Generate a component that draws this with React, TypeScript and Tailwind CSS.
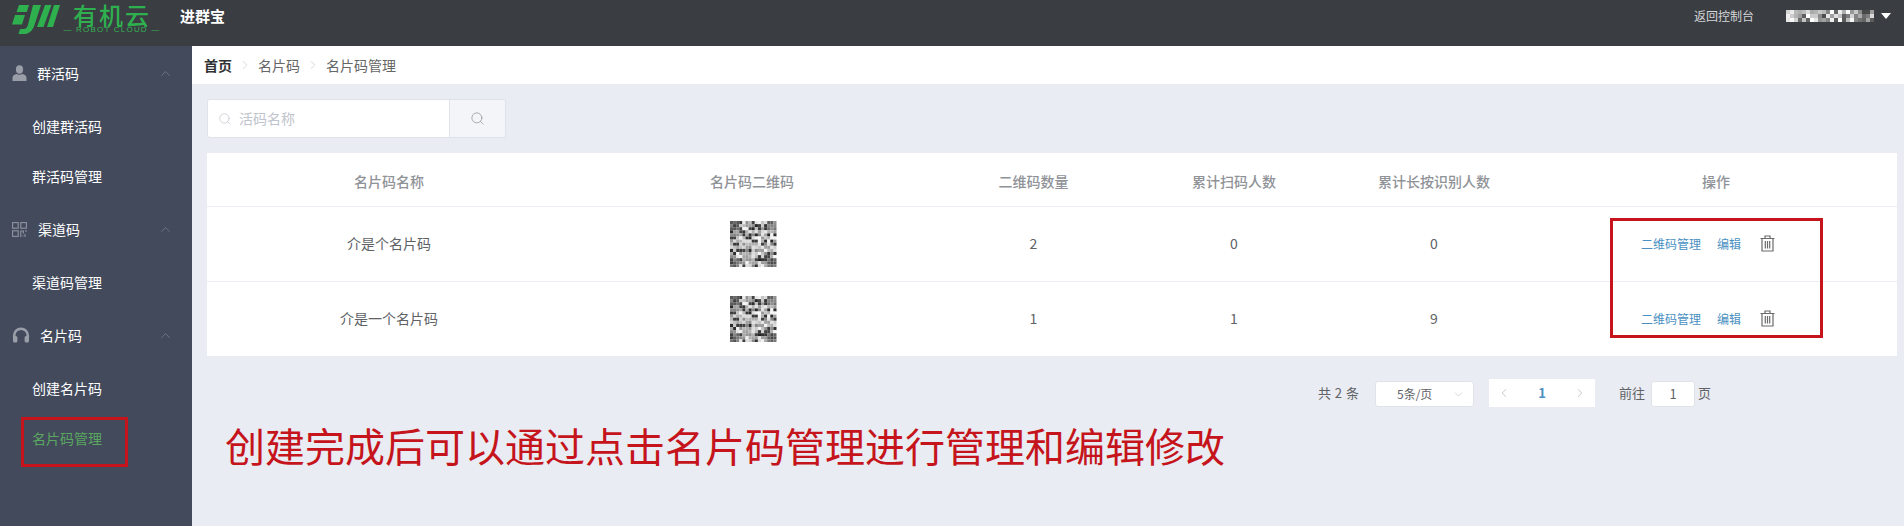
import { ChevronDown, ChevronLeft, ChevronRight, ChevronUp, Search } from "lucide-react";

const FONT = "font-['Noto_Sans_CJK_SC','Liberation_Sans',sans-serif]";

function Logo() {
  return (
    <div className="flex items-start w-[168px] h-[40px] pl-[12px]">
      <svg width="48" height="36" viewBox="0 0 48 36">
        <g fill="#2fb04f">
          <path d="M7 5h10l-2.2 7H4.5z" />
          <path d="M3 15h10l-3 9.5H0z" />
          <path d="M21 5h8l-6.5 20c-1.2 4-4 8-9 9H6.5l1.6-5h3.4c2.5 0 3.6-1.5 4.4-4z" />
          <path d="M33 5h6.5l-8 22H25z" />
          <path d="M42 5h6l-7 22h-6z" />
        </g>
      </svg>
      <div className="ml-[2px] w-[100px] flex flex-col items-center pt-[4px]">
        <span className="text-[24px] leading-[22px] font-medium tracking-[2px] text-[#2fb04f]">有机云</span>
        <span className="text-[8px] leading-[8px] tracking-[1.2px] text-[#35b354] whitespace-nowrap font-['Liberation_Sans',sans-serif]">— ROBOT CLOUD —</span>
      </div>
    </div>
  );
}

function Mosaic({ cols, rows, size, seed, light }: { cols: number; rows: number; size: number; seed: number; light?: boolean }) {
  // fixed pseudo random greys, same picture on every render
  const cells = [];
  let n = seed;
  for (let y = 0; y < rows; y++) {
    for (let x = 0; x < cols; x++) {
      n = (n * 1103515245 + 12345) % 2147483648;
      const v = (n >> 12) % 256;
      const corner = !light && (x < 3 || x > cols - 4) && (y < 3 || y > rows - 4);
      const grey = light ? 70 + (v * 185) / 255 : corner ? 60 + v / 3 : v < 70 ? 35 + v / 2 : 90 + v * 0.62;
      const g = Math.round(grey);
      cells.push(<rect key={x + "-" + y} x={x * size} y={y * size} width={size} height={size} fill={`rgb(${g},${g},${g})`} />);
    }
  }
  return (
    <svg width={cols * size} height={rows * size} className="block">
      {cells}
    </svg>
  );
}

function UserIcon() {
  return (
    <svg width="15" height="16" viewBox="0 0 15 16" fill="#9a9ea8">
      <ellipse cx="7.5" cy="4.5" rx="3.6" ry="4.2" />
      <path d="M0.5 16v-3.2c0-2.2 2-3.3 4-3.8 1.8 1 4.2 1 6 0 2 .5 4 1.6 4 3.8V16z" />
    </svg>
  );
}

function QrIcon() {
  return (
    <svg width="15" height="15" viewBox="0 0 15 15" fill="none" stroke="#8f94a0" strokeWidth="1.1">
      <rect x="0.6" y="0.6" width="5.6" height="5.6" />
      <rect x="8.8" y="0.6" width="5.6" height="5.6" />
      <rect x="0.6" y="8.8" width="5.6" height="5.6" />
      <path d="M8.8 15V9h2.6v2.4M13 9h2M13 12v3M10.5 14h1" />
    </svg>
  );
}

function HeadsetIcon() {
  return (
    <svg width="18" height="16" viewBox="0 0 18 16" fill="none">
      <path d="M2.2 11V8.5a6.8 6.8 0 0 1 13.6 0V11" stroke="#9a9ea8" strokeWidth="2.6" />
      <rect x="1" y="9" width="4.4" height="6.5" rx="1.6" fill="#9a9ea8" />
      <rect x="12.6" y="9" width="4.4" height="6.5" rx="1.6" fill="#9a9ea8" />
    </svg>
  );
}

function TrashIcon() {
  return (
    <svg width="15" height="17" viewBox="0 0 15 17" fill="none" stroke="#6b6b6b" strokeWidth="1.2">
      <path d="M0.5 3.5h14M5 3.2V1h5v2.2" />
      <path d="M2 3.5V16h11V3.5" />
      <path d="M5.3 6v7.5M7.5 6v7.5M9.7 6v7.5" />
    </svg>
  );
}

function SideGroup({ icon, title, gap, items }: { icon: React.ReactNode; title: string; gap: string; items: { label: string; active?: boolean }[] }) {
  return (
    <div className="mb-[2px]">
      <div className="flex items-center h-[50px] pl-[12px] pr-[19px] text-[14px] text-white">
        <span className="flex w-[18px]">{icon}</span>
        <span className={gap}>{title}</span>
        <ChevronUp size={15} strokeWidth={1.2} className="ml-auto text-[#7c8291]" />
      </div>
      <div className="pt-[4px]">
        {items.map((it) => (
          <div key={it.label} className={`flex items-center h-[50px] pl-[32px] pb-[2px] text-[14px] ${it.active ? "text-[#5aa75f]" : "text-white"}`}>
            {it.label}
          </div>
        ))}
      </div>
    </div>
  );
}

const GRID = "grid grid-cols-[364px_362px_201px_200px_200px_1fr] items-center";

const rows = [
  { name: "介是个名片码", count: 2, scans: 0, press: 0, seed: 11 },
  { name: "介是一个名片码", count: 1, scans: 1, press: 9, seed: 11 },
];

export default function App() {
  return (
    <div className={`relative w-[1904px] h-[526px] overflow-hidden bg-[#e9ecf2] ${FONT}`}>
      <header className="flex items-start h-[46px] bg-[#3a3d42] text-white">
        <Logo />
        <span className="mt-[5px] ml-[12px] text-[15px] font-bold leading-[22px]">进群宝</span>
        <div className="ml-auto flex items-center h-[32px] pr-[13px]">
          <span className="text-[12px] text-[#d5d6d8]">返回控制台</span>
          <span className="ml-[32px] mr-[7px]">
            <Mosaic cols={22} rows={3} size={4} seed={7} light />
          </span>
          <svg width="10" height="6" viewBox="0 0 10 6"><path d="M0 0h10L5 6z" fill="#fff" /></svg>
        </div>
      </header>

      <div className="flex h-[480px]">
        <aside className="w-[192px] shrink-0 bg-[#434a5c] pt-[2px]">
          <SideGroup icon={<UserIcon />} title="群活码" gap="ml-[7px]" items={[{ label: "创建群活码" }, { label: "群活码管理" }]} />
          <SideGroup icon={<QrIcon />} title="渠道码" gap="ml-[8px]" items={[{ label: "渠道码管理" }]} />
          <SideGroup icon={<HeadsetIcon />} title="名片码" gap="ml-[10px]" items={[{ label: "创建名片码" }, { label: "名片码管理", active: true }]} />
        </aside>

        <main className="flex-1 min-w-0">
          <div className="flex items-center h-[38px] pl-[12px] bg-white text-[14px] text-[#666]">
            <span className="font-bold text-[#303133]">首页</span>
            <ChevronRight size={14} strokeWidth={1} className="mx-[6px] text-[#bbb]" />
            <span>名片码</span>
            <ChevronRight size={14} strokeWidth={1} className="mx-[6px] text-[#bbb]" />
            <span>名片码管理</span>
          </div>

          <div className="flex mt-[15px] ml-[15px] w-[299px] h-[39px] rounded-[3px] border border-[#dfe2e8] overflow-hidden">
            <div className="flex items-center w-[241px] pl-[10px] bg-white text-[14px] text-[#c0c4cc]">
              <Search size={14} strokeWidth={1.2} />
              <span className="ml-[7px]">活码名称</span>
            </div>
            <div className="flex flex-1 items-center justify-center border-l border-[#dfe2e8] bg-[#f4f5f9] text-[#8f949c]">
              <Search size={15} strokeWidth={1.2} />
            </div>
          </div>

          <div className="mt-[15px] ml-[15px] mr-[7px] bg-white">
            <div className={`${GRID} h-[53px] pt-[3px] text-center text-[14px] font-medium text-[#8f9297]`}>
              <span>名片码名称</span>
              <span>名片码二维码</span>
              <span>二维码数量</span>
              <span>累计扫码人数</span>
              <span>累计长按识别人数</span>
              <span className="pl-[1px]">操作</span>
            </div>
            {rows.map((r) => (
              <div key={r.name} className={`${GRID} h-[75px] border-t border-[#ebeef5] text-center text-[14px] text-[#606266]`}>
                <span className="-mt-[2px]">{r.name}</span>
                <span className="flex justify-center ml-[3px]">
                  <Mosaic cols={15} rows={15} size={3.1} seed={r.seed} />
                </span>
                <span className="-mt-[2px]">{r.count}</span>
                <span className="-mt-[2px]">{r.scans}</span>
                <span className="-mt-[2px]">{r.press}</span>
                <span className="flex items-center pl-[107px] text-[12px] text-[#4a90c2]">
                  <span>二维码管理</span>
                  <span className="ml-[16px]">编辑</span>
                  <span className="ml-[19px] -mt-[2px]"><TrashIcon /></span>
                </span>
              </div>
            ))}
          </div>

          <div className="flex items-center justify-end mt-[22px] pr-[193px] h-[30px] text-[13px] text-[#606266]">
            <span className="[word-spacing:1px]">共 2 条</span>
            <div className="flex items-center ml-[16px] w-[99px] h-[26px] mt-[2px] pl-[21px] pr-[8px] rounded-[3px] border border-[#e0e3e9] bg-white text-[12px]">
              <span>5条/页</span>
              <ChevronDown size={13} strokeWidth={1} className="ml-auto text-[#b4b8c0]" />
            </div>
            <div className="flex items-center justify-between ml-[15px] w-[106px] h-[28px] px-[8px] bg-white">
              <ChevronLeft size={14} strokeWidth={1.4} className="text-[#b8bcc4]" />
              <span className="font-bold text-[#4a90c2]">1</span>
              <ChevronRight size={14} strokeWidth={1.4} className="text-[#b8bcc4]" />
            </div>
            <span className="ml-[24px]">前往</span>
            <div className="flex items-center justify-center ml-[6px] w-[44px] h-[26px] mt-[2px] rounded-[3px] border border-[#e0e3e9] bg-white">1</div>
            <span className="ml-[3px]">页</span>
          </div>
        </main>
      </div>

      {/* annotations laid over the screenshot */}
      <div className="absolute left-[21px] top-[417px] w-[107px] h-[50px] border-[3px] border-[#c5141b]" />
      <div className="absolute left-[1610px] top-[218px] w-[213px] h-[120px] border-[3px] border-[#c5141b]" />
      <div className="absolute left-[225px] top-[415px] text-[40px] leading-[60px] text-[#c5141b] whitespace-nowrap">
        创建完成后可以通过点击名片码管理进行管理和编辑修改
      </div>
    </div>
  );
}
